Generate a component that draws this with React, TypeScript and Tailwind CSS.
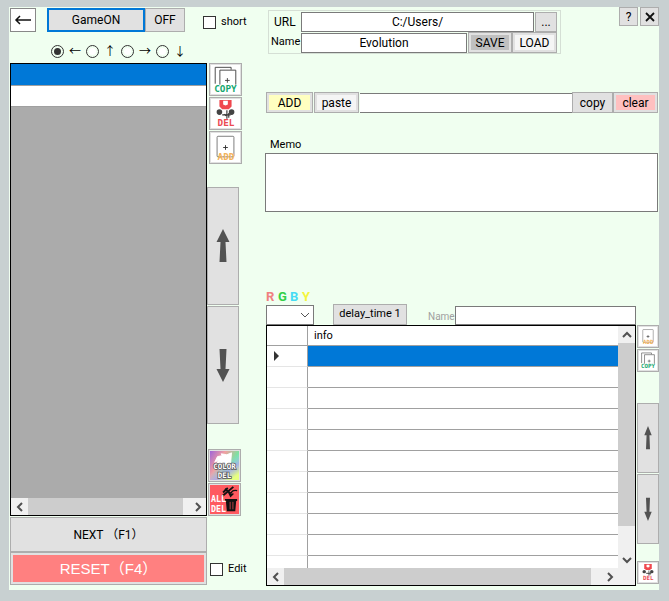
import type { ReactNode } from "react";

const mono = "font-['DejaVu_Sans_Mono',monospace] font-bold";

function CopyIcon() {
  return (
    <svg viewBox="0 0 31 31" className="block h-full w-full bg-white" fill="none" stroke="#444" aria-hidden="true">
      <path d="M4.500 20V2.500H21.500V5" />
      <path d="M9.500 21V5.500H26.500V21" fill="#fff" />
      <path d="M15 16.500H20M17.500 14V19" />
      <text x="15.500" y="29" textAnchor="middle" fontSize="10" fill="#16a870" stroke="none" className={mono}>COPY</text>
    </svg>
  );
}

function DelIcon() {
  return (
    <svg viewBox="0 0 31 31" className="block h-full w-full bg-white" aria-hidden="true">
      <path d="M9 1H22V8L19 11H12L9 8Z" fill="#f0484e" />
      <path d="M13 2H18V6L15.500 7L13 6Z" fill="#fff" />
      <circle cx="9" cy="14" r="3" fill="#444" />
      <circle cx="22" cy="14" r="3" fill="#444" />
      <path d="M14.500 16L16 18M17 12V21M19 15V20M12 17H21" fill="none" stroke="#333" strokeWidth="1.200" />
      <text x="16" y="29" textAnchor="middle" fontSize="10" fill="#ec4a52" className={mono}>DEL</text>
    </svg>
  );
}

function AddIcon() {
  return (
    <svg viewBox="0 0 31 31" className="block h-full w-full bg-white" fill="none" stroke="#777" aria-hidden="true">
      <rect x="6.500" y="3.500" width="18" height="22" rx="1" />
      <path d="M13 15.500H18M15.500 13V18" stroke="#333" />
      <text x="16" y="29" textAnchor="middle" fontSize="10" fill="#f3b35a" stroke="none" className={mono}>ADD</text>
    </svg>
  );
}

function ColorDelIcon() {
  return (
    <svg viewBox="0 0 31 31" className="block h-full w-full" aria-hidden="true">
      <defs>
        <linearGradient id="hueAcross" x1="0" y1="0" x2="1" y2="0.6">
          <stop offset="0" stopColor="#a065d8" />
          <stop offset="0.4" stopColor="#f2a0a0" />
          <stop offset="0.75" stopColor="#7be3a0" />
          <stop offset="1" stopColor="#7df0a8" />
        </linearGradient>
        <linearGradient id="hueDown" x1="0" y1="0" x2="0.7" y2="1">
          <stop offset="0.5" stopColor="#8fd8ff" stopOpacity="0" />
          <stop offset="0.75" stopColor="#b49cff" stopOpacity="0.7" />
          <stop offset="1" stopColor="#e6ff80" />
        </linearGradient>
      </defs>
      <rect width="31" height="31" fill="url(#hueAcross)" />
      <rect width="31" height="31" fill="url(#hueDown)" />
      <path d="M8 6L13 5L12 3L18 4L23 2L22 13L17 15L7 14L9 10L5 12Z" fill="#fff" stroke="#fff" strokeLinejoin="round" />
      <g fill="#fff" stroke="#555" strokeWidth="1.600" paintOrder="stroke" textAnchor="middle" fontSize="8" className={mono}>
        <text x="15.500" y="19">COLOR</text>
        <text x="15.500" y="29">DEL</text>
      </g>
    </svg>
  );
}

function AllDelIcon() {
  return (
    <svg viewBox="0 0 31 31" className="block h-full w-full bg-[#ff5a60]" aria-hidden="true">
      <path d="M13 12L25 2M16 4L22 9M14 8L19 3" fill="none" stroke="#111" strokeWidth="2" />
      <path d="M29 6C25 5 22 7 22 11M20 8L22 12L25 9" fill="none" stroke="#111" strokeWidth="1.500" />
      <path d="M16 15H29V17H28L27 28H18L17 17H16Z" fill="#111" />
      <path d="M21.500 18V26M24.500 18V26" stroke="#c5444a" />
      <g fill="#fff" fontSize="9" className={mono}>
        <text x="1" y="18">ALL</text>
        <text x="1" y="29">DEL</text>
      </g>
    </svg>
  );
}

function Arrow({ down, small }: { down?: boolean; small?: boolean }) {
  return (
    <svg
      viewBox="0 0 14 34"
      preserveAspectRatio="none"
      className={`${small ? "h-6 w-2" : "h-[34px] w-[14px]"} ${down ? "rotate-180" : ""}`}
      fill="#525252"
      aria-hidden="true"
    >
      <path d="M7 0L13.500 13H9.500L10.500 33H3.500L4.500 13H0.500Z" />
    </svg>
  );
}

function Chevron({ turn = "" }: { turn?: string }) {
  return (
    <svg viewBox="0 0 10 10" className={`h-[10px] w-[10px] ${turn}`} fill="none" stroke="#505050" strokeWidth="2" aria-hidden="true">
      <path d="M7 1L3 5L7 9" />
    </svg>
  );
}

const face = "flex shrink-0 items-center justify-center border border-[#adadad] bg-[#e1e1e1]";

function Button({ className = "", fill, children }: { className?: string; fill?: string; children: ReactNode }) {
  return (
    <button className={`${face} ${fill ? "p-[2px]" : ""} ${className}`}>
      {fill ? <span className={`flex h-full w-full items-center justify-center ${fill}`}>{children}</span> : children}
    </button>
  );
}

function IconButton({ label, small, children }: { label: string; small?: boolean; children: ReactNode }) {
  return (
    <button
      aria-label={label}
      className={`shrink-0 border border-[#adadad] bg-[#e1e1e1] p-px ${small ? "h-[23px] w-[22px]" : "h-[33px] w-[33px]"}`}
    >
      {children}
    </button>
  );
}

function Check({ label }: { label: string }) {
  return (
    <label className="flex items-center gap-[5px] text-[11px] leading-4">
      <input type="checkbox" className="h-[13px] w-[13px] shrink-0 appearance-none border border-[#333] bg-white checked:bg-[#333]" />
      {label}
    </label>
  );
}

function HScroll({ thumb }: { thumb: string }) {
  return (
    <div className="flex h-[17px] shrink-0 bg-[#f0f0f0]">
      <button aria-label="Scroll left" className="flex w-[17px] items-center justify-center"><Chevron /></button>
      <div className="flex-1"><div className={`h-full bg-[#cdcdcd] ${thumb}`} /></div>
      <button aria-label="Scroll right" className="flex w-[17px] items-center justify-center"><Chevron turn="rotate-180" /></button>
    </div>
  );
}

const directions = [
  { name: "left", glyph: "←" },
  { name: "up", glyph: "↑" },
  { name: "right", glyph: "→" },
  { name: "down", glyph: "↓" },
];

const rows = Array.from({ length: 11 }, (_, i) => i);
const field = "min-w-0 border border-[#7a7a7a] bg-white px-1 outline-none";

function LeftPane() {
  return (
    <section className="flex w-[244px] shrink-0 flex-col pt-px pl-px">
      <div className="flex h-6 items-stretch">
        <button aria-label="Back" className="flex w-[26px] shrink-0 items-center justify-center border border-[#888] bg-white">
          <svg viewBox="0 0 18 12" className="h-3 w-[18px]" fill="none" stroke="#111" strokeWidth="1.500" aria-hidden="true">
            <path d="M17 6H2M6 2L2 6L6 10" />
          </svg>
        </button>
        <button className="ml-[11px] w-[98px] shrink-0 border-2 border-[#0078d7] bg-[#e1e1e1]">GameON</button>
        <Button className="w-10">OFF</Button>
        <div className="ml-[18px] pt-[6px]"><Check label="short" /></div>
      </div>

      <div className="mt-3 flex h-[14px] pl-[41px]" role="radiogroup" aria-label="Direction">
        {directions.map((d, i) => (
          <label key={d.name} className="flex w-[35px] items-center">
            <input
              type="radio"
              name="direction"
              aria-label={d.name}
              defaultChecked={i === 0}
              className="h-[13px] w-[13px] shrink-0 appearance-none rounded-full border border-[#333] bg-white bg-clip-content p-[2px] checked:bg-[#333]"
            />
            <span className="w-[22px] text-center font-['Noto_Sans_CJK_JP',sans-serif] leading-[14px]">{d.glyph}</span>
          </label>
        ))}
      </div>

      <div className="mt-[5px] flex flex-1">
        <div className="flex w-[197px] shrink-0 flex-col pb-[5px]">
          <div className="flex flex-1 flex-col border border-black bg-[#ababab]">
            <div className="h-[22px] border-b border-[#a0a0a0] bg-[#0078d7]" />
            <div className="h-[21px] border-b border-[#a0a0a0] bg-white" />
            <div className="flex-1" />
            <HScroll thumb="w-[96%]" />
          </div>
          <Button className="mt-px h-[35px]">NEXT （F1）</Button>
          <Button className="h-[33px]" fill="bg-[#ff8080]">
            <span className="font-['Liberation_Sans','Noto_Sans_CJK_JP',sans-serif] text-[15px] leading-5 text-white">RESET（F4）</span>
          </Button>
        </div>

        <div className="flex flex-1 flex-col pb-[13px]">
          <div className="flex flex-col gap-px pl-[2px]">
            <IconButton label="Copy"><CopyIcon /></IconButton>
            <IconButton label="Delete"><DelIcon /></IconButton>
            <IconButton label="Add"><AddIcon /></IconButton>
          </div>
          <div className="mt-[23px] flex flex-col gap-px">
            <button aria-label="Move up" className={`${face} h-[118px] w-8`}><Arrow /></button>
            <button aria-label="Move down" className={`${face} h-[118px] w-8`}><Arrow down /></button>
          </div>
          <div className="mt-auto flex flex-col gap-px pl-px">
            <IconButton label="Delete color"><ColorDelIcon /></IconButton>
            <IconButton label="Delete all"><AllDelIcon /></IconButton>
          </div>
          <div className="mt-[45px] pl-[3px]"><Check label="Edit" /></div>
        </div>
      </div>
    </section>
  );
}

function InfoTable() {
  return (
    <div className="flex min-w-0 flex-1 flex-col border border-black bg-[#f0f0f0]">
      <div className="flex flex-1">
        <div className="relative flex-1 overflow-hidden bg-white">
          <table className="absolute inset-x-0 top-0 w-full table-fixed border-separate border-spacing-0">
            <thead>
              <tr className="h-5">
                <td className="w-[41px] border-r border-b border-[#a0a0a0] p-0" />
                <th scope="col" className="border-b border-[#a0a0a0] p-0 pl-[6px] text-left text-[11px] leading-4 font-normal">info</th>
              </tr>
            </thead>
            <tbody>
              {rows.map((r) => (
                <tr key={r} className="h-[21px]">
                  <td className="border-r border-b border-r-[#a0a0a0] border-b-[#e5e5e5] p-0 pl-[7px]">
                    {r === 0 && (
                      <svg viewBox="0 0 5 10" className="block h-[10px] w-[5px]" fill="#333" aria-hidden="true">
                        <path d="M0 0L5 5L0 10Z" />
                      </svg>
                    )}
                  </td>
                  <td className={`border-b border-[#a0a0a0] p-0 ${r === 0 ? "bg-[#0078d7]" : ""}`} />
                </tr>
              ))}
            </tbody>
          </table>
        </div>
        <div className="flex w-[17px] flex-col">
          <button aria-label="Scroll up" className="flex h-[17px] items-center justify-center"><Chevron turn="rotate-90" /></button>
          <div className="flex-1"><div className="h-[88%] bg-[#cdcdcd]" /></div>
          <button aria-label="Scroll down" className="flex h-[17px] items-center justify-center"><Chevron turn="-rotate-90" /></button>
        </div>
      </div>
      <div className="pr-[17px]"><HScroll thumb="w-[97%]" /></div>
    </div>
  );
}

function RightPane() {
  return (
    <section className="ml-3 flex min-w-0 flex-1 flex-col">
      <div className="flex items-start justify-between">
        <div className="mt-[3px] ml-[3px] flex w-[293px] flex-col border border-[#d5dfd5] pt-px">
          <div className="flex h-5 items-center">
            <label htmlFor="url" className="w-8 pl-[5px]">URL</label>
            <input id="url" defaultValue="C:/Users/" className={`${field} h-5 w-[233px] text-center`} />
            <Button className="ml-px h-5 w-[22px]">...</Button>
          </div>
          <div className="flex h-[21px] items-center">
            <label htmlFor="name" className="w-8 pl-[2px] text-[11px]">Name</label>
            <input id="name" defaultValue="Evolution" className={`${field} h-5 w-[166px] text-center`} />
            <Button className="ml-px h-[21px] w-11" fill="bg-[#c0c0c0]">SAVE</Button>
            <Button className="h-[21px] w-[45px]" fill="bg-[#f5f5f5]">LOAD</Button>
          </div>
        </div>
        <div className="flex gap-[2px]">
          <Button className="h-[19px] w-[19px]">?</Button>
          <button aria-label="Close" className={`${face} h-[19px] w-[19px]`}>
            <svg viewBox="0 0 10 10" className="h-[10px] w-[10px]" stroke="#111" strokeWidth="1.800" aria-hidden="true">
              <path d="M1 1L9 9M9 1L1 9" />
            </svg>
          </button>
        </div>
      </div>

      <div className="mt-[38px] flex h-[21px] items-center pr-px pl-px">
        <Button className="h-full w-[47px]" fill="bg-[#ffffc0]">ADD</Button>
        <Button className="ml-px h-full w-[45px]" fill="bg-[#f5f5f5]">paste</Button>
        <input aria-label="Entry" className={`${field} ml-px h-5 w-0 flex-1 border-x-0`} />
        <Button className="h-full w-[41px]">copy</Button>
        <Button className="h-full w-[45px]" fill="bg-[#ffc0c0]">clear</Button>
      </div>

      <label htmlFor="memo" className="mt-6 pl-[5px] text-[11px] leading-4">Memo</label>
      <textarea id="memo" className={`${field} mr-px h-[59px] resize-none`} />

      <div className="mt-[78px] flex h-[14px] pl-px text-[13px] leading-[14px] font-bold" aria-label="Color codes">
        <span className="w-3 text-[#f08080]">R</span>
        <span className="w-3 text-[#32d048]">G</span>
        <span className="w-3 text-[#45dcf5]">B</span>
        <span className="w-3 text-[#f5f53c]">Y</span>
      </div>
      <div className="flex h-[21px] items-end pr-[23px] pl-px">
        <div className="relative h-5 w-12">
          <select aria-label="Color" className="h-full w-full appearance-none border border-[#7a7a7a] bg-white outline-none">
            <option value="" />
            <option>R</option>
            <option>G</option>
            <option>B</option>
            <option>Y</option>
          </select>
          <svg viewBox="0 0 10 6" className="pointer-events-none absolute top-[7px] right-1 h-[6px] w-[10px]" fill="none" stroke="#555" aria-hidden="true">
            <path d="M1 1L5 5L9 1" />
          </svg>
        </div>
        <Button className="ml-[19px] h-[21px] w-[74px] text-[11px]">delay_time 1</Button>
        <label htmlFor="item-name" className="ml-[21px] w-[27px] text-[10px] leading-4 text-[#a0a0a0]">Name</label>
        <input id="item-name" className={`${field} h-[19px] w-0 flex-1`} />
      </div>

      <div className="flex flex-1 pb-1 pl-px">
        <InfoTable />
        <div className="ml-px flex w-[22px] shrink-0 flex-col">
          <div className="flex flex-col gap-px">
            <IconButton label="Add row" small><AddIcon /></IconButton>
            <IconButton label="Copy row" small><CopyIcon /></IconButton>
          </div>
          <div className="mt-[31px] flex flex-col gap-px">
            <button aria-label="Move row up" className={`${face} h-[70px]`}><Arrow small /></button>
            <button aria-label="Move row down" className={`${face} h-[70px]`}><Arrow down small /></button>
          </div>
          <div className="mt-auto"><IconButton label="Delete row" small><DelIcon /></IconButton></div>
        </div>
      </div>
    </section>
  );
}

export default function App() {
  return (
    <main className="flex min-h-screen bg-[#c8d0d1] pt-[7px] pr-[10px] pb-[11px] pl-[9px] font-[Roboto,'Noto_Sans_CJK_JP',sans-serif] text-xs text-black">
      <div className="flex min-w-0 flex-1 bg-[#f0fff0]">
        <LeftPane />
        <RightPane />
      </div>
    </main>
  );
}
